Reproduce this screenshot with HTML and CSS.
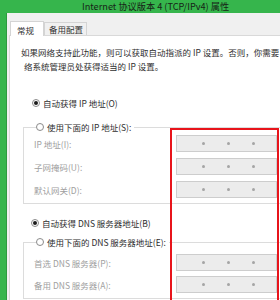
FILE: index.html
```html
<!DOCTYPE html>
<html lang="zh">
<head>
<meta charset="utf-8">
<link rel="stylesheet" href="styles.css">
</head>
<body>
<div class="app">
  <div class="titlebar"><span class="title">Internet 协议版本 4 (TCP/IPv4) 属性</span></div>
  <div class="main">
    <div class="strip"></div>
    <div class="window">
      <div class="tabs">
        <div class="tab active">常规</div>
        <div class="tab">备用配置</div>
      </div>
      <div class="page">
        <p class="intro"><span class="line">如果网络支持此功能，则可以获取自动指派的 IP 设置。否则，你需要</span><span class="line">络系统管理员处获得适当的 IP 设置。</span></p>
        <div class="radio-row first"><span class="radio checked"></span>自动获得 IP 地址(O)</div>
        <div class="group g1">
          <div class="legend"><span class="radio"></span>使用下面的 IP 地址(S):</div>
          <div class="field"><span class="label">IP 地址(I):</span><span class="ip"><span class="dot"></span><span class="dot"></span><span class="dot"></span></span></div>
          <div class="field"><span class="label">子网掩码(U):</span><span class="ip"><span class="dot"></span><span class="dot"></span><span class="dot"></span></span></div>
          <div class="field"><span class="label">默认网关(D):</span><span class="ip"><span class="dot"></span><span class="dot"></span><span class="dot"></span></span></div>
        </div>
        <div class="radio-row second"><span class="radio checked"></span>自动获得 DNS 服务器地址(B)</div>
        <div class="group g2">
          <div class="legend"><span class="radio"></span>使用下面的 DNS 服务器地址(E):</div>
          <div class="field"><span class="label">首选 DNS 服务器(P):</span><span class="ip"><span class="dot"></span><span class="dot"></span><span class="dot"></span></span></div>
          <div class="field"><span class="label">备用 DNS 服务器(A):</span><span class="ip"><span class="dot"></span><span class="dot"></span><span class="dot"></span></span></div>
        </div>
      </div>
    </div>
  </div>
  <div class="highlight"></div>
</div>
</body>
</html>
```
FILE: styles.css
```css
* { box-sizing: border-box; }
html, body { margin: 0; padding: 0; }
body {
  width: 280px;
  height: 300px;
  overflow: hidden;
  background: #ffffff;
  font-family: "Noto Sans CJK SC", "Noto Sans", sans-serif;
  color: #2b2b2b;
}
.app {
  position: relative;
  width: 280px;
  height: 300px;
  overflow: hidden;
}
.titlebar {
  height: 13px;
  background: #36b54c;
  display: flex;
  align-items: center;
  padding-left: 82px;
  white-space: nowrap;
}
.title {
  font-size: 9.2px;
  line-height: 13px;
  color: #172417;
}
.main {
  display: flex;
  height: 287px;
}
.strip {
  width: 7px;
  flex: none;
  background: #36b54c;
  border-right: 1px solid #2b9a3e;
}
.window {
  flex: none;
  width: 320px;
  background: #f0f0f0;
  padding: 7px 0 0 2px;
}
.tabs {
  display: flex;
  align-items: flex-end;
  height: 15px;
  padding-left: 1px;
}
.tab {
  font-size: 8.5px;
  line-height: 12px;
  height: 13px;
  padding: 0 3px 0 4px;
  border: 1px solid #d4d4d4;
  border-bottom: none;
  background: #f0f0f0;
  color: #333;
}
.tab.active {
  height: 15px;
  padding: 2px 9px 0 6px;
  background: #ffffff;
  margin-bottom: -1px;
  position: relative;
  z-index: 1;
}
.page {
  background: #ffffff;
  border: 1px solid #d9d9d9;
  height: 272px;
  padding-left: 11px;
}
.intro {
  margin: 9px 0 0 0;
  font-size: 8.5px;
  line-height: 14px;
  color: #2e2e2e;
  white-space: nowrap;
}
.intro .line { display: block; }
.intro .line + .line { padding-left: 3px; }
.radio-row, .legend {
  display: flex;
  align-items: center;
  font-size: 8.5px;
  line-height: 14px;
  height: 14px;
  color: #2e2e2e;
  white-space: nowrap;
}
.radio-row.first { margin: 23px 0 0 11px; }
.radio-row.second { margin: 12px 0 0 10px; }
.radio {
  width: 8px;
  height: 8px;
  border: 1px solid #8a8a8a;
  border-radius: 50%;
  background: #fff;
  margin-right: 3px;
  flex: none;
  display: flex;
  align-items: center;
  justify-content: center;
}
.radio.checked::after {
  content: "";
  width: 4px;
  height: 4px;
  border-radius: 50%;
  background: #1a1a1a;
}
.group {
  margin-left: 2px;
  width: 320px;
  border: 1px solid #dcdcdc;
}
.g1 { margin-top: 17px; padding: 0 0 5px 10px; }
.g2 { margin-top: 12px; padding: 0 0 5px 10px; }
.legend {
  margin: -8px 0 0 2px;
  background: #fff;
  width: max-content;
  padding-right: 3px;
}
.field {
  display: flex;
  align-items: center;
  height: 17px;
}
.g1 .legend + .field { margin-top: 1px; }
.g1 .field + .field { margin-top: 6px; }
.g2 .legend + .field { margin-top: 5px; }
.g2 .field + .field { margin-top: 5px; }
.label {
  width: 142px;
  flex: none;
  font-size: 8.5px;
  color: #a0a0a0;
  white-space: nowrap;
}
.ip {
  width: 101px;
  height: 17px;
  background: #ececec;
  border: 1px solid #cdcdcd;
  display: flex;
  align-items: center;
  padding-left: 25px;
  gap: 22px;
}
.dot {
  width: 3px;
  height: 3px;
  background: #a5a5a5;
  border-radius: 50%;
  flex: none;
}
.highlight {
  position: absolute;
  left: 170px;
  top: 128px;
  width: 109px;
  height: 200px;
  border: 2px solid #e8141b;
}
```
